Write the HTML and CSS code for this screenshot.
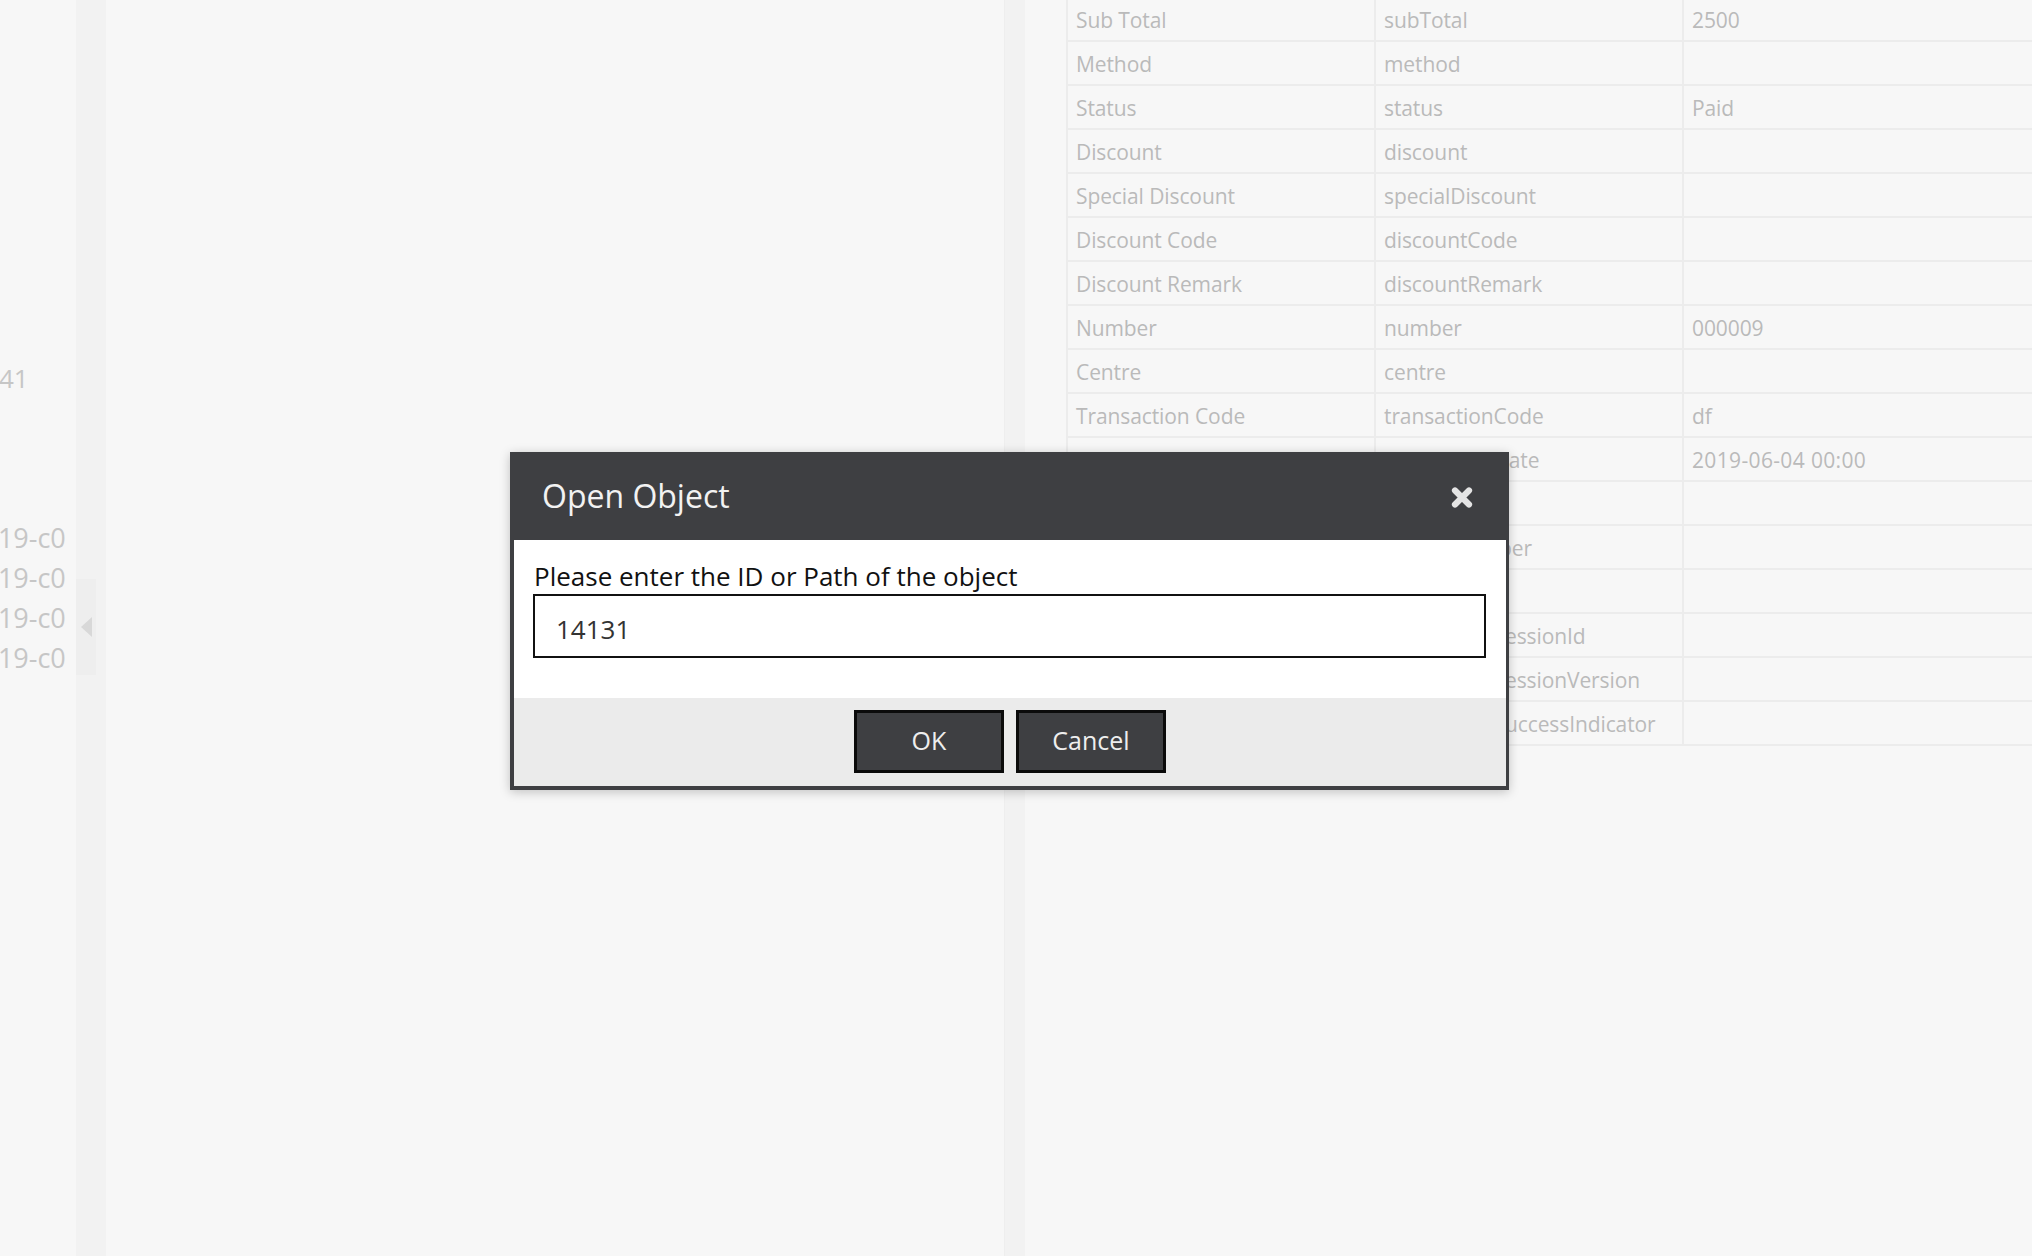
FILE: index.html
```html
<!DOCTYPE html>
<html>
<head>
<meta charset="utf-8">
<link rel="stylesheet" href="styles.css">
</head>
<body>
<div class="app">
  <div class="left-panel">
    <div class="left-clip">
      <div class="left-line tail">41</div>
      <div class="left-line"></div>
      <div class="left-line"></div>
      <div class="left-line"></div>
      <div class="left-line cut">2019-c00a</div>
      <div class="left-line cut">2019-c00b</div>
      <div class="left-line cut">2019-c00c</div>
      <div class="left-line cut">2019-c00d</div>
    </div>
  </div>
  <div class="strip strip-left">
    <div class="handle"><span class="arrow"></span></div>
  </div>
  <div class="main-panel"></div>
  <div class="strip strip-right"></div>
  <div class="right-panel">
    <table class="grid">
      <colgroup><col class="c1"><col class="c2"><col class="c3"></colgroup>
      <tbody>
        <tr><td>Sub Total</td><td>subTotal</td><td>2500</td></tr>
        <tr><td>Method</td><td>method</td><td></td></tr>
        <tr><td>Status</td><td>status</td><td>Paid</td></tr>
        <tr><td>Discount</td><td>discount</td><td></td></tr>
        <tr><td>Special Discount</td><td>specialDiscount</td><td></td></tr>
        <tr><td>Discount Code</td><td>discountCode</td><td></td></tr>
        <tr><td>Discount Remark</td><td>discountRemark</td><td></td></tr>
        <tr><td>Number</td><td>number</td><td>000009</td></tr>
        <tr><td>Centre</td><td>centre</td><td></td></tr>
        <tr><td>Transaction Code</td><td>transactionCode</td><td>df</td></tr>
        <tr><td>Transaction Date</td><td>transactionDate</td><td class="date">2019-06-04 00:00</td></tr>
        <tr><td>Order</td><td>order</td><td></td></tr>
        <tr><td>Receipt Number</td><td>receiptNumber</td><td></td></tr>
        <tr><td>Remark</td><td>remark</td><td></td></tr>
        <tr><td>Session Id</td><td>transactionSessionId</td><td></td></tr>
        <tr><td>Session Version</td><td>transactionSessionVersion</td><td></td></tr>
        <tr><td>Success Indicator</td><td>transactionSuccessIndicator</td><td></td></tr>
      </tbody>
    </table>
  </div>
</div>

<div class="dialog">
  <div class="dialog-header">
    <span class="dialog-title">Open Object</span>
    <svg class="close" width="22" height="21" viewBox="0 0 22 21">
      <path d="M4 3.5 L18 17.5 M18 3.5 L4 17.5" stroke="#e4e4e4" stroke-width="6.2" stroke-linecap="round" fill="none"/>
    </svg>
  </div>
  <div class="dialog-frame">
    <div class="dialog-body">
      <div class="field-label">Please enter the ID or Path of the object</div>
      <div class="field-input">14131</div>
    </div>
    <div class="dialog-footer">
      <button class="btn">OK</button>
      <button class="btn">Cancel</button>
    </div>
  </div>
</div>
</body>
</html>
```

FILE: styles.css
```css
* { box-sizing: border-box; }
html, body {
  margin: 0;
  padding: 0;
  width: 2032px;
  height: 1256px;
  overflow: hidden;
  background: #f7f7f7;
  font-family: "Open Sans", "Liberation Sans", sans-serif;
}
.app {
  display: flex;
  width: 2032px;
  height: 1256px;
}
.left-panel {
  width: 76px;
  flex: none;
}
.left-clip {
  width: 66px;
  overflow: hidden;
  padding-top: 358px;
  color: #c6c6c6;
  font-size: 26px;
}
.left-line {
  height: 40px;
  line-height: 40px;
  white-space: nowrap;
}
.left-line.tail { margin-left: -1px; }
.left-line.cut { margin-left: -33px; font-size: 27px; }
.strip {
  flex: none;
  background: #f2f2f2;
}
.strip-left {
  width: 30px;
  padding-top: 579px;
}
.handle {
  width: 20px;
  height: 96px;
  background: #eeeeee;
  display: flex;
  align-items: center;
  padding-left: 5px;
}
.arrow {
  width: 0;
  height: 0;
  border-top: 10px solid transparent;
  border-bottom: 10px solid transparent;
  border-right: 11px solid #d8d8d8;
}
.main-panel {
  width: 898px;
  flex: none;
  background: #f7f7f7;
}
.strip-right {
  width: 21px;
  border-left: 1px solid #eeeeee;
}
.right-panel {
  flex: 1;
  padding-left: 41px;
  overflow: hidden;
}
.grid {
  border-collapse: collapse;
  table-layout: fixed;
  margin-top: -3px;
  width: 1000px;
  color: #bababa;
  font-size: 21px;
}
.grid col.c1 { width: 308px; }
.grid col.c2 { width: 308px; }
.grid col.c3 { width: 384px; }
.grid td {
  height: 44px;
  padding: 2px 0 0 8px;
  border: 2px solid #ececec;
  border-top: none;
  white-space: nowrap;
  overflow: hidden;
  line-height: 40px;
  vertical-align: middle;
  letter-spacing: -0.1px;
}
.grid td.date { letter-spacing: 0.35px; }

.dialog {
  position: absolute;
  left: 510px;
  top: 452px;
  width: 999px;
  box-shadow: 0 2px 10px rgba(0, 0, 0, 0.22);
}
.dialog-header {
  height: 88px;
  background: #3e3f42;
  display: flex;
  align-items: center;
  justify-content: space-between;
  padding: 0 36px 0 32px;
}
.dialog-title {
  color: #f2f2f2;
  font-size: 32px;
  line-height: 44px;
}
.close { display: block; margin-top: 2px; }
.dialog-frame {
  border: 4px solid #3e3f42;
  border-top: none;
  border-right-width: 3px;
}
.dialog-body {
  background: #ffffff;
  padding: 19px 20px 40px 19px;
}
.field-label {
  color: #111;
  font-size: 26px;
  line-height: 35px;
  padding-left: 1px;
}
.field-input {
  height: 64px;
  border: 2px solid #111;
  padding: 4px 0 0 21px;
  font-size: 26px;
  line-height: 58px;
  color: #333;
}
.dialog-footer {
  background: #ebebeb;
  height: 88px;
  display: flex;
  justify-content: center;
  align-items: flex-start;
  gap: 12px;
  padding-top: 12px;
}
.btn {
  width: 150px;
  height: 63px;
  background: #3e3f42;
  border: 3px solid #0b0b0b;
  color: #eeeeee;
  font-family: "Open Sans", "Liberation Sans", sans-serif;
  font-size: 25px;
  padding: 0 0 3px 0;
  margin: 0;
}
```
